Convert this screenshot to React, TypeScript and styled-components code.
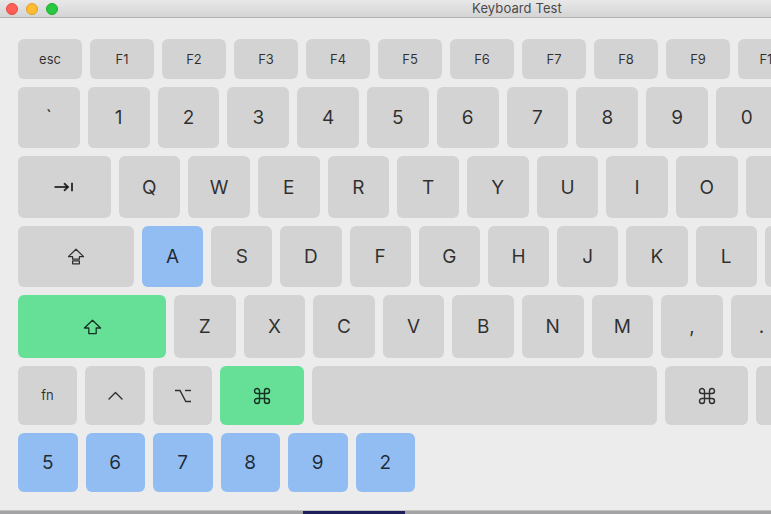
import React from "react";
import styled, { createGlobalStyle } from "styled-components";

const GlobalStyle = createGlobalStyle`
  html, body {
    margin: 0;
    padding: 0;
    width: 771px;
    height: 514px;
    overflow: hidden;
    background: #a3a3a6;
  }
  body {
    font-family: Inter, "Liberation Sans", Arial, sans-serif;
  }
`;

const Screen = styled.div`
  display: flex;
  flex-direction: column;
  width: 771px;
  height: 514px;
  overflow: hidden;
`;

const Window = styled.div`
  width: 1034px;
  height: 511px;
  flex: none;
  background: #ececec;
  display: flex;
  flex-direction: column;
  overflow: hidden;
  border-bottom: 1px solid #c4c4c4;
  box-sizing: border-box;
`;

const TitleBar = styled.div`
  height: 18px;
  flex: none;
  box-sizing: border-box;
  display: grid;
  grid-template-columns: 1fr auto 1fr;
  align-items: center;
  background: linear-gradient(#e9e8e9, #d5d4d5);
  border-bottom: 1px solid #b2b2b2;
`;

const Lights = styled.div`
  display: flex;
  gap: 8px;
  padding-left: 6px;
  align-items: center;
`;

const Light = styled.span<{ $fill: string; $edge: string }>`
  width: 12px;
  height: 12px;
  border-radius: 50%;
  box-sizing: border-box;
  background: ${(p) => p.$fill};
  border: 0.5px solid ${(p) => p.$edge};
`;

const Title = styled.div`
  font-size: 13px;
  color: #4a4a4a;
  line-height: 17px;
  letter-spacing: 0.1px;
`;

const Keyboard = styled.div`
  display: flex;
  flex-direction: column;
  gap: 8px;
  padding: 21px 0 0 18px;
`;

const Row = styled.div<{ $h: number }>`
  display: flex;
  gap: 8px;
  height: ${(p) => p.$h}px;
  flex: none;
`;

type Tone = "gray" | "blue" | "green";
const tones: Record<Tone, string> = {
  gray: "#d3d3d3",
  blue: "#92bdf2",
  green: "#66e097",
};

const Key = styled.div<{ $w: number; $tone?: Tone; $small?: boolean }>`
  width: ${(p) => p.$w}px;
  flex: none;
  height: 100%;
  border-radius: 6px;
  background: ${(p) => tones[p.$tone || "gray"]};
  display: flex;
  align-items: center;
  justify-content: center;
  color: rgba(0, 0, 0, 0.78);
  font-size: ${(p) => (p.$small ? 13 : 19)}px;
  line-height: 1;
  user-select: none;
  svg {
    display: block;
  }
`;

const Desktop = styled.div`
  height: 3px;
  flex: none;
  display: flex;
  padding-left: 303px;
`;

const Wallpaper = styled.div`
  width: 102px;
  background: #1f1f5c;
`;

const TabIcon = () => (
  <svg width="20" height="10" viewBox="0 0 20 10" fill="none" stroke="currentColor" strokeWidth="1.9">
    <path d="M0.5 5H13.5" />
    <path d="M10 1.3L14 5L10 8.7" strokeLinejoin="miter" />
    <path d="M18 0.8V9.2" />
  </svg>
);

const CapsIcon = () => (
  <svg width="18" height="17" viewBox="0 0 18 17" fill="none" stroke="currentColor" strokeWidth="1.2" strokeLinejoin="round">
    <path d="M9 1.2L16.6 8.6H12.4V11.2H5.6V8.6H1.4Z" />
    <rect x="5.6" y="12.9" width="6.8" height="2.9" />
  </svg>
);

const ShiftIcon = () => (
  <svg width="19" height="16" viewBox="0 0 19 16" fill="none" stroke="currentColor" strokeWidth="1.3" strokeLinejoin="round">
    <path d="M9.5 1.2L17.6 9H13.2V14.6H5.8V9H1.4Z" />
  </svg>
);

const CaretIcon = () => (
  <svg width="15" height="9" viewBox="0 0 15 9" fill="none" stroke="currentColor" strokeWidth="1.4" strokeLinecap="round" strokeLinejoin="round">
    <path d="M1 8L7.5 1.5L14 8" />
  </svg>
);

const OptionIcon = () => (
  <svg width="18" height="14" viewBox="0 0 18 14" fill="none" stroke="currentColor" strokeWidth="1.4">
    <path d="M1 1.5H6L11.8 12.5H17" />
    <path d="M11 1.5H17" />
  </svg>
);

const CommandIcon = () => (
  <svg width="20" height="20" viewBox="0 0 24 24" fill="none" stroke="currentColor" strokeWidth="1.7" strokeLinecap="round" strokeLinejoin="round">
    <path d="M15 6v12a3 3 0 1 0 3-3H6a3 3 0 1 0 3 3V6a3 3 0 1 0-3 3h12a3 3 0 1 0-3-3" />
  </svg>
);

const fnRow = ["esc", "F1", "F2", "F3", "F4", "F5", "F6", "F7", "F8", "F9", "F10", "F11", "F12", ""];
const numRow = ["`", "1", "2", "3", "4", "5", "6", "7", "8", "9", "0", "-", "=", ""];
const qRow = ["Q", "W", "E", "R", "T", "Y", "U", "I", "O", "P", "[", "]", "\\"];
const aRow = ["A", "S", "D", "F", "G", "H", "J", "K", "L", ";", "'", ""];
const zRow = ["Z", "X", "C", "V", "B", "N", "M", ",", ".", "/", ""];
const pressed = ["5", "6", "7", "8", "9", "2"];

export default function App() {
  return (
    <>
      <GlobalStyle />
      <Screen>
        <Window>
          <TitleBar>
            <Lights>
              <Light $fill="#fe5f57" $edge="#e2463f" />
              <Light $fill="#febc2e" $edge="#dfa123" />
              <Light $fill="#28c840" $edge="#1dad2b" />
            </Lights>
            <Title>Keyboard Test</Title>
            <div />
          </TitleBar>
          <Keyboard>
            <Row $h={40}>
              {fnRow.map((k, i) => (
                <Key key={i} $w={64} $small>
                  {k}
                </Key>
              ))}
            </Row>
            <Row $h={61}>
              {numRow.map((k, i) => (
                <Key key={i} $w={i === 13 ? 90 : 61.8}>
                  {k}
                </Key>
              ))}
            </Row>
            <Row $h={62}>
              <Key $w={92.5}>
                <TabIcon />
              </Key>
              {qRow.map((k) => (
                <Key key={k} $w={61.7}>
                  {k}
                </Key>
              ))}
            </Row>
            <Row $h={61}>
              <Key $w={116}>
                <CapsIcon />
              </Key>
              {aRow.map((k, i) => (
                <Key key={i} $w={i === 11 ? 110 : 61.2} $tone={k === "A" ? "blue" : "gray"}>
                  {k}
                </Key>
              ))}
            </Row>
            <Row $h={63}>
              <Key $w={148} $tone="green">
                <ShiftIcon />
              </Key>
              {zRow.map((k, i) => (
                <Key key={i} $w={i === 10 ? 150 : 61.6}>
                  {k}
                </Key>
              ))}
            </Row>
            <Row $h={59}>
              <Key $w={59} $small>
                fn
              </Key>
              <Key $w={60}>
                <CaretIcon />
              </Key>
              <Key $w={59}>
                <OptionIcon />
              </Key>
              <Key $w={84} $tone="green">
                <CommandIcon />
              </Key>
              <Key $w={345} />
              <Key $w={83}>
                <CommandIcon />
              </Key>
              <Key $w={59}>
                <OptionIcon />
              </Key>
            </Row>
            <Row $h={59}>
              {pressed.map((k, i) => (
                <Key key={i} $w={59.5} $tone="blue">
                  {k}
                </Key>
              ))}
            </Row>
          </Keyboard>
        </Window>
        <Desktop>
          <Wallpaper />
        </Desktop>
      </Screen>
    </>
  );
}
